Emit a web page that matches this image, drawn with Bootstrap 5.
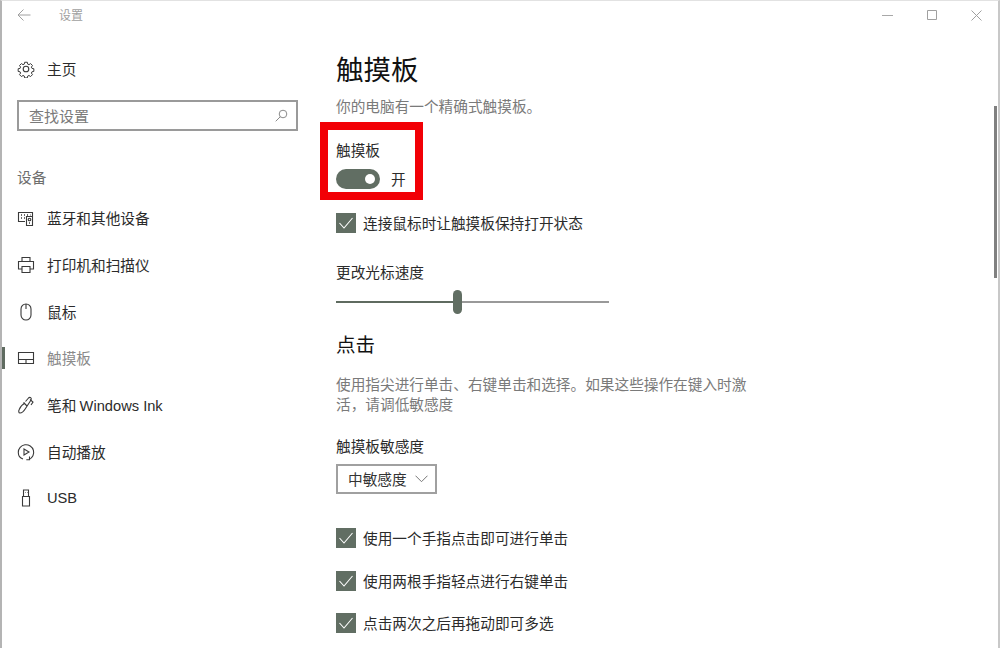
<!DOCTYPE html>
<html lang="zh-CN">
<head>
<meta charset="utf-8">
<title>设置</title>
<link rel="stylesheet" href="https://cdn.jsdelivr.net/npm/bootstrap@5.3.0/dist/css/bootstrap.min.css">
<style>
html,body{height:100%;overflow:hidden;background:#fff}
body{font-family:"Noto Sans CJK SC","Liberation Sans",sans-serif;font-size:14.67px;color:#2b2b2b;line-height:20px}
.latin{font-family:"Liberation Sans","Noto Sans CJK SC",sans-serif}
.win{height:648px;width:1000px;border-left:2px solid #b4b4b4;border-top:1px solid #e2e2e2;border-right:2px solid #c8c8c8;position:relative;overflow:hidden}
.tbar{height:28px;padding-left:15px;color:#a0a0a0;font-size:12px}
.tbar-title{margin-left:28px;width:823px}
.winbtns{gap:34px}
.side{width:318px;flex:none}
.home{height:20px;margin-top:30px;padding-left:15px}
.ico{width:18px;height:18px;flex:none;margin-right:12px;fill:none;stroke:#3a3a3a;stroke-width:1.1}
.searchbox{margin:21px 0 0 15px;width:281px;height:31px;border:2px solid #9a9a9a;padding:0 8px 0 10px;color:#7a7a7a;font-size:15px}
.grp{margin:36px 0 0 15px;color:#6e6e6e;height:20px}
.navrows{margin-top:8px}
.navrow{height:46.7px;padding-left:15px;position:relative}
.navrow.on{color:#8a8a8a}
.navrow.on::before{content:"";position:absolute;left:0;top:12px;width:3px;height:22px;background:#5f6b60}
.main{padding:0 0 0 16px;flex:1;min-width:0}
.pgtitle{font-size:27.5px;line-height:40px;margin:19px 0 0;color:#111;font-weight:400}
.desc{color:#7a7a7a;margin-top:8px}
.redbox{margin:6px 0 0 -16px;width:103px;height:78px;border:8px solid #f20006;padding:10px 0 0 8px}
.tog-row{margin-top:9px;height:20px}
.tog{width:44px;height:20px;border-radius:10px;background:#616e63;position:relative;display:block;flex:none;margin-right:11px}
.tog::after{content:"";position:absolute;right:5px;top:5px;width:10px;height:10px;border-radius:50%;background:#fff}
.chk{width:20px;height:20px;background:#616e63;display:block;flex:none;margin-right:7px;stroke:#fff;fill:none;stroke-width:1.1}
.row1{margin-top:13px}
.lbl2{margin-top:29px}
.slider{width:273px;height:24px;margin-top:8px;position:relative}
.slider i{display:block;height:2px;flex:none}
.s-a{width:117px;background:#5f6b60}
.s-b{flex:1!important;background:#999}
.s-th{position:absolute;left:117px;top:0;width:9px;height:24px;border-radius:5px;background:#616e63}
.h2t{font-size:19.5px;line-height:28px;margin:16px 0 0;color:#111;font-weight:400}
.para{color:#7a7a7a;width:420px;margin:16px 0 0}
.lbl3{margin-top:22px}
.sel{margin-top:8px;width:101px;height:30px;border:2px solid #a0a0a0;padding:0 7px 0 10px;color:#333}
.checks{margin-top:34px;gap:22.5px}
.sb{position:absolute;right:1px;top:105px;width:3px;height:172px;background:#808080}
</style>
</head>
<body>
<div class="win d-flex flex-column">
  <div class="tbar d-flex align-items-center">
    <svg width="14" height="12" viewBox="0 0 14 12" fill="none" stroke="#a0a0a0" stroke-width="1"><path d="M13.5 6H1M6.5.5 1 6l5.500 5.500"/></svg>
    <span class="tbar-title">设置</span>
    <div class="d-flex align-items-center winbtns">
      <svg width="11" height="11" viewBox="0 0 11 11" stroke="#a8a8a8" fill="none"><path d="M0 5.500h11"/></svg>
      <svg width="10" height="10" viewBox="0 0 10 10" stroke="#a0a0a0" fill="none"><path d="M.5.5h9v9h-9z"/></svg>
      <svg width="11" height="11" viewBox="0 0 11 11" stroke="#a0a0a0" fill="none"><path d="m.5.500 10 10M10.500.5l-10 10"/></svg>
    </div>
  </div>
  <div class="d-flex flex-grow-1">
    <nav class="side">
      <div class="home d-flex align-items-center">
        <svg class="ico" viewBox="0 0 18 18"><circle cx="9" cy="9" r="2.800"/><path d="M7.500 1.500h3l.4 2.100 1.400.6 1.800-1.200 2.100 2.100-1.200 1.800.6 1.400 2.100.4v3l-2.100.4-.6 1.400 1.200 1.800-2.100 2.100-1.800-1.200-1.400.6-.4 2.100h-3l-.4-2.100-1.400-.6-1.800 1.200-2.100-2.100 1.200-1.800-.6-1.400-2.100-.4v-3l2.100-.4.6-1.400-1.200-1.800 2.100-2.100 1.800 1.200 1.400-.6z" transform="translate(.9 .9) scale(.9)"/></svg>
        <span>主页</span>
      </div>
      <div class="searchbox d-flex align-items-center justify-content-between">
        <span>查找设置</span>
        <svg width="13" height="13" viewBox="0 0 13 13" fill="none" stroke="#8a8a8a"><circle cx="8" cy="5" r="3.800"/><path d="M5.300 7.700.7 12.300"/></svg>
      </div>
      <div class="grp">设备</div>
      <div class="navrows">
        <div class="navrow d-flex align-items-center">
          <svg class="ico" viewBox="0 0 18 18"><path d="M8 12.500H1.500v-9h14V7"/><path d="M9.500 7.500h6v9h-6z"/><circle cx="12.500" cy="10.500" r="1.300"/><path d="M12 14h1M4 6h1M7 6h1M10 6h1M13 6h.5M4 9h1M7 9h1" stroke-width="1.300"/></svg>
          <span>蓝牙和其他设备</span>
        </div>
        <div class="navrow d-flex align-items-center">
          <svg class="ico" viewBox="0 0 18 18"><path d="M5 5.500v-4h8v4M5 13H1.500V5.500h15V13H13"/><path d="M5 10.500h8v6H5z"/></svg>
          <span>打印机和扫描仪</span>
        </div>
        <div class="navrow d-flex align-items-center">
          <svg class="ico" viewBox="0 0 18 18"><rect x="4" y="1" width="10" height="16" rx="5"/><path d="M9 1v5"/></svg>
          <span>鼠标</span>
        </div>
        <div class="navrow on d-flex align-items-center">
          <svg class="ico" viewBox="0 0 18 18"><path d="M1.500 3.500h15v11h-15zM1.500 10.500h15M9 10.500v4"/></svg>
          <span>触摸板</span>
        </div>
        <div class="navrow d-flex align-items-center">
          <svg class="ico" viewBox="0 0 18 18"><path d="M8.500 5.500 11.500 2c1.500-1.500 3.500 0 2.500 2L8.500 12.500c-1.200 2-3.500 4.500-5.500 4.500-1.500 0-1.500-2-.8-3.500C3.500 10.500 6 8 8 7"/><path d="M6.500 6.500 10 10M13 3.500 16 6l-2 3"/></svg>
          <span>笔和 <span class="latin">Windows Ink</span></span>
        </div>
        <div class="navrow d-flex align-items-center">
          <svg class="ico" viewBox="0 0 18 18"><path d="M6 16C3 15 1.300 12.300 1.300 9.500a7.700 7.700 0 1 1 10.700 7"/><path d="M7 6v6l5-3z"/><path d="M12.500 13.500v3.200H9.300"/></svg>
          <span>自动播放</span>
        </div>
        <div class="navrow d-flex align-items-center">
          <svg class="ico" viewBox="0 0 18 18"><path d="M5.500 7.500h7v9.500h-7zM6.500 7.500V1h5v6.500"/><path d="M8 3.500h.5M10 3.500h.5"/></svg>
          <span class="latin">USB</span>
        </div>
      </div>
    </nav>
    <main class="main">
      <h1 class="pgtitle">触摸板</h1>
      <div class="desc">你的电脑有一个精确式触摸板。</div>
      <div class="redbox">
        <div>触摸板</div>
        <div class="tog-row d-flex align-items-center"><span class="tog"></span><span>开</span></div>
      </div>
      <div class="row1 d-flex align-items-center">
        <svg class="chk" viewBox="0 0 20 20"><path d="m3.500 10 4.500 5 8.500-10"/></svg>
        <span>连接鼠标时让触摸板保持打开状态</span>
      </div>
      <div class="lbl2">更改光标速度</div>
      <div class="slider d-flex align-items-center"><i class="s-a"></i><i class="s-b"></i><span class="s-th"></span></div>
      <h2 class="h2t">点击</h2>
      <p class="para">使用指尖进行单击、右键单击和选择。如果这些操作在键入时激活，请调低敏感度</p>
      <div class="lbl3">触摸板敏感度</div>
      <div class="sel d-flex align-items-center justify-content-between">
        <span>中敏感度</span>
        <svg width="13" height="8" viewBox="0 0 13 8" fill="none" stroke="#777"><path d="m.5.700 6 6 6-6"/></svg>
      </div>
      <div class="checks d-flex flex-column">
        <div class="d-flex align-items-center"><svg class="chk" viewBox="0 0 20 20"><path d="m3.500 10 4.500 5 8.500-10"/></svg><span>使用一个手指点击即可进行单击</span></div>
        <div class="d-flex align-items-center"><svg class="chk" viewBox="0 0 20 20"><path d="m3.500 10 4.500 5 8.500-10"/></svg><span>使用两根手指轻点进行右键单击</span></div>
        <div class="d-flex align-items-center"><svg class="chk" viewBox="0 0 20 20"><path d="m3.500 10 4.500 5 8.500-10"/></svg><span>点击两次之后再拖动即可多选</span></div>
      </div>
    </main>
  </div>
  <div class="sb"></div>
</div>
<script src="https://cdn.jsdelivr.net/npm/bootstrap@5.3.0/dist/js/bootstrap.bundle.min.js"></script>
</body>
</html>
